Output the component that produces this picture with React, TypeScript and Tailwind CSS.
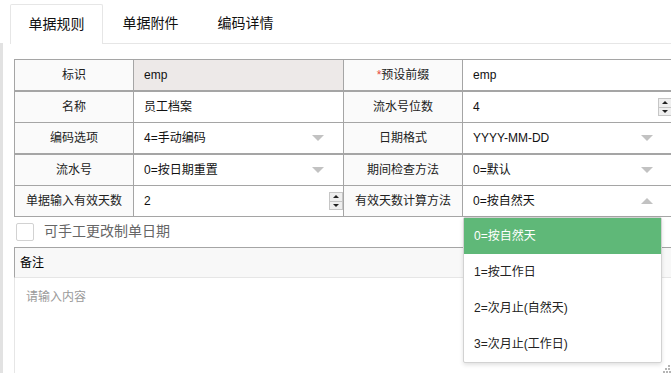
import React from "react";

const font = { fontFamily: '"Liberation Sans", "Noto Sans CJK SC", sans-serif' };

function Arrow({ up }: { up?: boolean }) {
  return (
    <span
      className={
        up
          ? "ml-auto mr-[19px] h-0 w-0 border-x-[6px] border-b-[6px] border-x-transparent border-b-[#c2c2c2]"
          : "ml-auto mr-[19px] h-0 w-0 border-x-[6px] border-t-[6px] border-x-transparent border-t-[#c2c2c2]"
      }
    />
  );
}

function Spinner() {
  return (
    <span className="ml-auto flex h-[18px] w-[14px] flex-col border border-[#c6c6c6] bg-[#efefef]">
      <span className="flex flex-1 items-center justify-center border-b border-[#c6c6c6]">
        <span className="h-0 w-0 border-x-[3px] border-b-[3px] border-x-transparent border-b-[#222]" />
      </span>
      <span className="flex flex-1 items-center justify-center">
        <span className="h-0 w-0 border-x-[3px] border-t-[3px] border-x-transparent border-t-[#222]" />
      </span>
    </span>
  );
}

type Cell = { label: React.ReactNode; value: string; kind?: "select" | "spin" | "open"; gray?: boolean };

const rows: { h: string; b: string; cells: Cell[] }[] = [
  {
    h: "h-[32px]",
    b: "border-b-2",
    cells: [
      { label: "标识", value: "emp", gray: true },
      { label: <><span className="text-[#e74c3c]">*</span>预设前缀</>, value: "emp" },
    ],
  },
  {
    h: "h-[31px]",
    b: "border-b",
    cells: [
      { label: "名称", value: "员工档案" },
      { label: "流水号位数", value: "4", kind: "spin" },
    ],
  },
  {
    h: "h-[32px]",
    b: "border-b-2",
    cells: [
      { label: "编码选项", value: "4=手动编码", kind: "select" },
      { label: "日期格式", value: "YYYY-MM-DD", kind: "select" },
    ],
  },
  {
    h: "h-[31px]",
    b: "border-b",
    cells: [
      { label: "流水号", value: "0=按日期重置", kind: "select" },
      { label: "期间检查方法", value: "0=默认", kind: "select" },
    ],
  },
  {
    h: "h-[31px]",
    b: "border-b",
    cells: [
      { label: "单据输入有效天数", value: "2", kind: "spin" },
      { label: "有效天数计算方法", value: "0=按自然天", kind: "open" },
    ],
  },
];

const options = ["0=按自然天", "1=按工作日", "2=次月止(自然天)", "3=次月止(工作日)"];

export default function App() {
  return (
    <div className="relative flex h-[373px] w-[671px] overflow-hidden bg-white text-[12px] text-[#333]" style={font}>
      <div className="mt-[43px] w-[3px] shrink-0 bg-[#e2e2e2]" />
      <div className="flex min-w-0 flex-1 flex-col pl-[7px]">
        {/* tabs */}
        <div className="flex h-[44px] shrink-0 items-end border-b border-[#e6e6e6] pt-[4px] text-[14px]">
          <div className="-mb-px flex h-[40px] w-[93px] items-center justify-center rounded-t-[2px] border border-b-0 border-[#e6e6e6] bg-white text-[#111]">
            单据规则
          </div>
          <div className="flex h-[39px] w-[95px] items-center justify-center text-[#111]">单据附件</div>
          <div className="flex h-[39px] w-[95px] items-center justify-center text-[#111]">编码详情</div>
        </div>

        <div className="ml-[4px] mt-[15px] w-[659px] shrink-0">
          <div className="border-l border-t border-[#a5a5a5]">
            {rows.map((r, i) => (
              <div key={i} className={`grid grid-cols-[119px_210px_119px_210px] ${r.h}`}>
                {r.cells.map((c, j) => (
                  <React.Fragment key={j}>
                    <div className={`flex items-center justify-center border-r ${r.b} border-[#a5a5a5] bg-[#fafafa] text-[#222]`}>
                      {c.label}
                    </div>
                    <div
                      className={`flex items-center border-r ${r.b} border-[#a5a5a5] pl-[10px] text-[#111] ${
                        c.gray ? "bg-[#ede9e8]" : "bg-white"
                      }`}
                    >
                      <span>{c.value}</span>
                      {c.kind === "select" && <Arrow />}
                      {c.kind === "open" && <Arrow up />}
                      {c.kind === "spin" && <Spinner />}
                    </div>
                  </React.Fragment>
                ))}
              </div>
            ))}
          </div>

          <div className="ml-[2px] mt-[5px] flex h-[19px] items-center">
            <span className="h-[18px] w-[18px] rounded-[2px] border border-[#d2d2d2] bg-white" />
            <span className="ml-[10px] text-[14px] text-[#666]">可手工更改制单日期</span>
          </div>

          <div className="mt-[6px] flex h-[31px] items-center border-l border-t border-b border-[#a5a5a5] border-b-[#e6e6e6] bg-[#f8f8f8] pl-[5px] text-[#000]">
            备注
          </div>
          <div className="h-[120px] border-l border-[#e6e6e6] pl-[11px] pt-[10px] text-[#9a9a9a]">请输入内容</div>
        </div>
      </div>

      {/* open select options */}
      <div className="absolute left-[463px] top-[217px] w-[199px] rounded-[2px] border border-[#d2d2d2] bg-white shadow-[0_2px_4px_rgba(0,0,0,0.12)]">
        {options.map((o, i) => (
          <div
            key={o}
            className={`flex h-[36px] items-center pl-[10px] ${i === 0 ? "bg-[#5fb878] text-white" : "text-[#222]"}`}
          >
            {o}
          </div>
        ))}
      </div>

      {/* textarea resize grip */}
      <svg className="absolute left-[663px] top-[365px]" width="8" height="8" viewBox="0 0 8 8">
        <rect x="5" y="0" width="2" height="2" fill="#b5b5b5" />
        <rect x="2" y="3" width="2" height="2" fill="#b5b5b5" />
        <rect x="5" y="3" width="2" height="2" fill="#b5b5b5" />
        <rect x="0" y="6" width="2" height="2" fill="#b5b5b5" />
        <rect x="3" y="6" width="2" height="2" fill="#b5b5b5" />
        <rect x="6" y="6" width="2" height="2" fill="#b5b5b5" />
      </svg>
    </div>
  );
}
